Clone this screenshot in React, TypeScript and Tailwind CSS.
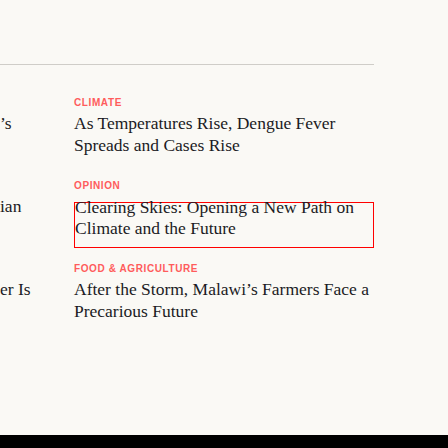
const labelCls =
  "font-['Liberation_Sans',Arial,sans-serif] text-[10px] leading-[12px] font-bold tracking-[0.06em] uppercase text-[#ff5c5c]";
const headCls = "font-['Liberation_Serif',serif] text-[17.5px] leading-[22px] text-[#1b1b24]";
const focusHeadCls = "font-['Liberation_Serif',serif] text-[17.5px] leading-[21px] text-[#1b1b24] -mt-[6px]";

interface RowProps {
  left: string;
  label: string;
  title: string;
  focused?: boolean;
  className?: string;
}

const Row: React.FC<RowProps> = ({ left, label, title, focused, className }) => {
  return (
    <div className={'flex ' + (className ?? '')}>
      <div className="w-[74px] shrink-0 overflow-hidden">
        <div className="h-[15px]" />
        <p className={headCls + ' whitespace-nowrap'}>{left}</p>
      </div>
      <div className="w-[300px] shrink-0">
        <p className={labelCls}>{label}</p>
        {focused ? (
          <div className="mt-[10px] h-[46px] border border-[#ff0000]">
            <p className={focusHeadCls}>{title}</p>
          </div>
        ) : (
          <p className={headCls + ' mt-[3px]'}>{title}</p>
        )}
      </div>
    </div>
  );
};

export default function App() {
  return (
    <div className="w-[448px] h-[448px] bg-[#faf9f5] flex flex-col overflow-hidden">
      <div className="h-[64px] shrink-0" />
      <div className="w-[374px] h-px shrink-0 self-start bg-[#cfcdc8]" />
      <Row
        className="mt-[32px]"
        left="’s"
        label="Climate"
        title="As Temperatures Rise, Dengue Fever Spreads and Cases Rise"
      />
      <Row
        className="mt-[24px]"
        left="ian"
        label="Opinion"
        title="Clearing Skies: Opening a New Path on Climate and the Future"
        focused
      />
      <Row
        className="mt-[15px]"
        left="er Is"
        label="Food & Agriculture"
        title="After the Storm, Malawi’s Farmers Face a Precarious Future"
      />
      <div className="flex-1" />
      <div className="h-[13px] bg-black shrink-0" />
    </div>
  );
}
